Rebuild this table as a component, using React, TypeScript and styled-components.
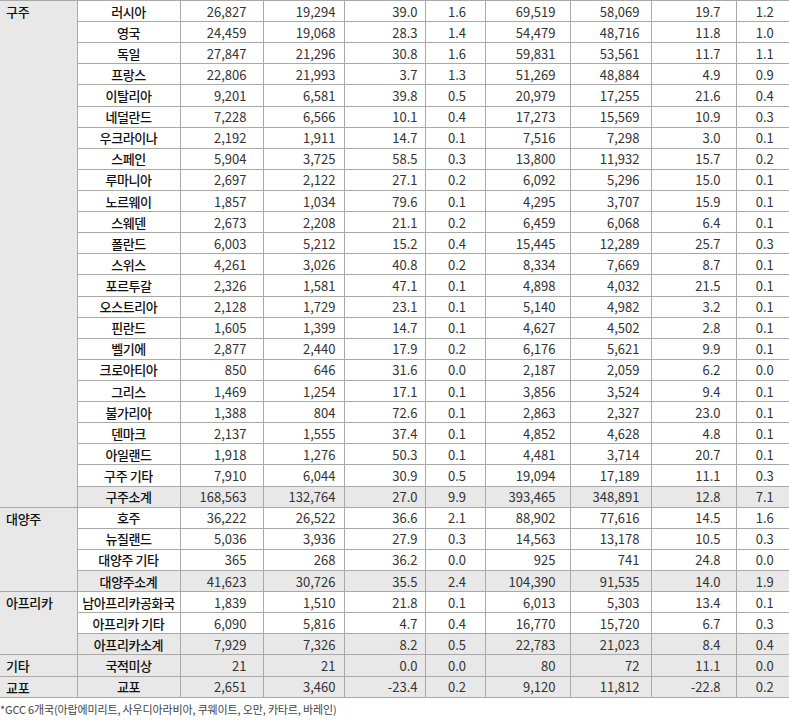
import React from "react";
import styled, { createGlobalStyle } from "styled-components";

const Global = createGlobalStyle`
  html, body { margin: 0; padding: 0; background: #fff; }
  body { font-family: "Noto Sans CJK KR", "Noto Sans", sans-serif; }
`;

const Page = styled.div`
  width: 789px;
  overflow: hidden;
`;

const Table = styled.table`
  width: 789px;
  table-layout: fixed;
  border-collapse: collapse;
  font-size: 13px;
  color: #222;
`;

const Row = styled.tr<{ $shade?: boolean }>`
  height: 21.12px;
  background: ${(p) => (p.$shade ? "#e8e8e8" : "#fff")};
`;

const Cell = styled.td`
  border: 1px solid #a9a9a9;
  padding: 0;
  line-height: 19px;
  white-space: nowrap;
  overflow: hidden;
  &:last-child { border-right: none; }
`;

const RegionCell = styled(Cell)`
  background: #e8e8e8;
  border-left: none;
  vertical-align: top;
  text-align: left;
  padding: 1px 0 0 6px;
  font-weight: 500;
  color: #111;
  letter-spacing: -0.3px;
`;

const NameCell = styled(Cell)`
  text-align: center;
  font-weight: 500;
  color: #111;
  letter-spacing: -0.4px;
`;

const NumCell = styled(Cell)<{ $pad: number; $center?: boolean }>`
  text-align: ${(p) => (p.$center ? "center" : "right")};
  padding-right: ${(p) => (p.$center ? 0 : p.$pad)}px;
  padding-left: ${(p) => (p.$center ? 4 : 0)}px;
  color: #333;
`;

const Note = styled.div`
  margin-top: 4px;
  font-size: 11px;
  color: #444;
  letter-spacing: -0.15px;
  line-height: 14px;
  white-space: nowrap;
`;

const widths = [77, 103, 83, 81, 81, 60, 85, 81, 85, 53];
const pads = [16, 8, 7, 0, 14, 11, 15, 0];
const centered = [false, false, false, true, false, false, false, true];

type Line = [string, ...string[]];

const groups: { region: string; rows: Line[]; total?: boolean }[] = [
  {
    region: "구주",
    total: true,
    rows: [
      ["러시아", "26,827", "19,294", "39.0", "1.6", "69,519", "58,069", "19.7", "1.2"],
      ["영국", "24,459", "19,068", "28.3", "1.4", "54,479", "48,716", "11.8", "1.0"],
      ["독일", "27,847", "21,296", "30.8", "1.6", "59,831", "53,561", "11.7", "1.1"],
      ["프랑스", "22,806", "21,993", "3.7", "1.3", "51,269", "48,884", "4.9", "0.9"],
      ["이탈리아", "9,201", "6,581", "39.8", "0.5", "20,979", "17,255", "21.6", "0.4"],
      ["네덜란드", "7,228", "6,566", "10.1", "0.4", "17,273", "15,569", "10.9", "0.3"],
      ["우크라이나", "2,192", "1,911", "14.7", "0.1", "7,516", "7,298", "3.0", "0.1"],
      ["스페인", "5,904", "3,725", "58.5", "0.3", "13,800", "11,932", "15.7", "0.2"],
      ["루마니아", "2,697", "2,122", "27.1", "0.2", "6,092", "5,296", "15.0", "0.1"],
      ["노르웨이", "1,857", "1,034", "79.6", "0.1", "4,295", "3,707", "15.9", "0.1"],
      ["스웨덴", "2,673", "2,208", "21.1", "0.2", "6,459", "6,068", "6.4", "0.1"],
      ["폴란드", "6,003", "5,212", "15.2", "0.4", "15,445", "12,289", "25.7", "0.3"],
      ["스위스", "4,261", "3,026", "40.8", "0.2", "8,334", "7,669", "8.7", "0.1"],
      ["포르투갈", "2,326", "1,581", "47.1", "0.1", "4,898", "4,032", "21.5", "0.1"],
      ["오스트리아", "2,128", "1,729", "23.1", "0.1", "5,140", "4,982", "3.2", "0.1"],
      ["핀란드", "1,605", "1,399", "14.7", "0.1", "4,627", "4,502", "2.8", "0.1"],
      ["벨기에", "2,877", "2,440", "17.9", "0.2", "6,176", "5,621", "9.9", "0.1"],
      ["크로아티아", "850", "646", "31.6", "0.0", "2,187", "2,059", "6.2", "0.0"],
      ["그리스", "1,469", "1,254", "17.1", "0.1", "3,856", "3,524", "9.4", "0.1"],
      ["불가리아", "1,388", "804", "72.6", "0.1", "2,863", "2,327", "23.0", "0.1"],
      ["덴마크", "2,137", "1,555", "37.4", "0.1", "4,852", "4,628", "4.8", "0.1"],
      ["아일랜드", "1,918", "1,276", "50.3", "0.1", "4,481", "3,714", "20.7", "0.1"],
      ["구주 기타", "7,910", "6,044", "30.9", "0.5", "19,094", "17,189", "11.1", "0.3"],
      ["구주소계", "168,563", "132,764", "27.0", "9.9", "393,465", "348,891", "12.8", "7.1"],
    ],
  },
  {
    region: "대양주",
    total: true,
    rows: [
      ["호주", "36,222", "26,522", "36.6", "2.1", "88,902", "77,616", "14.5", "1.6"],
      ["뉴질랜드", "5,036", "3,936", "27.9", "0.3", "14,563", "13,178", "10.5", "0.3"],
      ["대양주 기타", "365", "268", "36.2", "0.0", "925", "741", "24.8", "0.0"],
      ["대양주소계", "41,623", "30,726", "35.5", "2.4", "104,390", "91,535", "14.0", "1.9"],
    ],
  },
  {
    region: "아프리카",
    total: true,
    rows: [
      ["남아프리카공화국", "1,839", "1,510", "21.8", "0.1", "6,013", "5,303", "13.4", "0.1"],
      ["아프리카 기타", "6,090", "5,816", "4.7", "0.4", "16,770", "15,720", "6.7", "0.3"],
      ["아프리카소계", "7,929", "7,326", "8.2", "0.5", "22,783", "21,023", "8.4", "0.4"],
    ],
  },
  {
    region: "기타",
    rows: [["국적미상", "21", "21", "0.0", "0.0", "80", "72", "11.1", "0.0"]],
  },
  {
    region: "교포",
    rows: [["교포", "2,651", "3,460", "-23.4", "0.2", "9,120", "11,812", "-22.8", "0.2"]],
  },
];

export default function App() {
  return (
    <Page>
      <Global />
      <Table>
        <colgroup>
          {widths.map((w, i) => (
            <col key={i} style={{ width: w }} />
          ))}
        </colgroup>
        <tbody>
          {groups.map((g) =>
            g.rows.map((r, i) => {
              const single = g.rows.length === 1;
              const shade = single || (g.total && i === g.rows.length - 1);
              const [name, ...nums] = r;
              return (
                <Row key={g.region + name} $shade={shade}>
                  {i === 0 && <RegionCell rowSpan={g.rows.length}>{g.region}</RegionCell>}
                  <NameCell>{name}</NameCell>
                  {nums.map((n, j) => (
                    <NumCell key={j} $pad={pads[j]} $center={centered[j]}>
                      {n}
                    </NumCell>
                  ))}
                </Row>
              );
            })
          )}
        </tbody>
      </Table>
      <Note>*GCC 6개국(아랍에미리트, 사우디아라비아, 쿠웨이트, 오만, 카타르, 바레인)</Note>
    </Page>
  );
}
